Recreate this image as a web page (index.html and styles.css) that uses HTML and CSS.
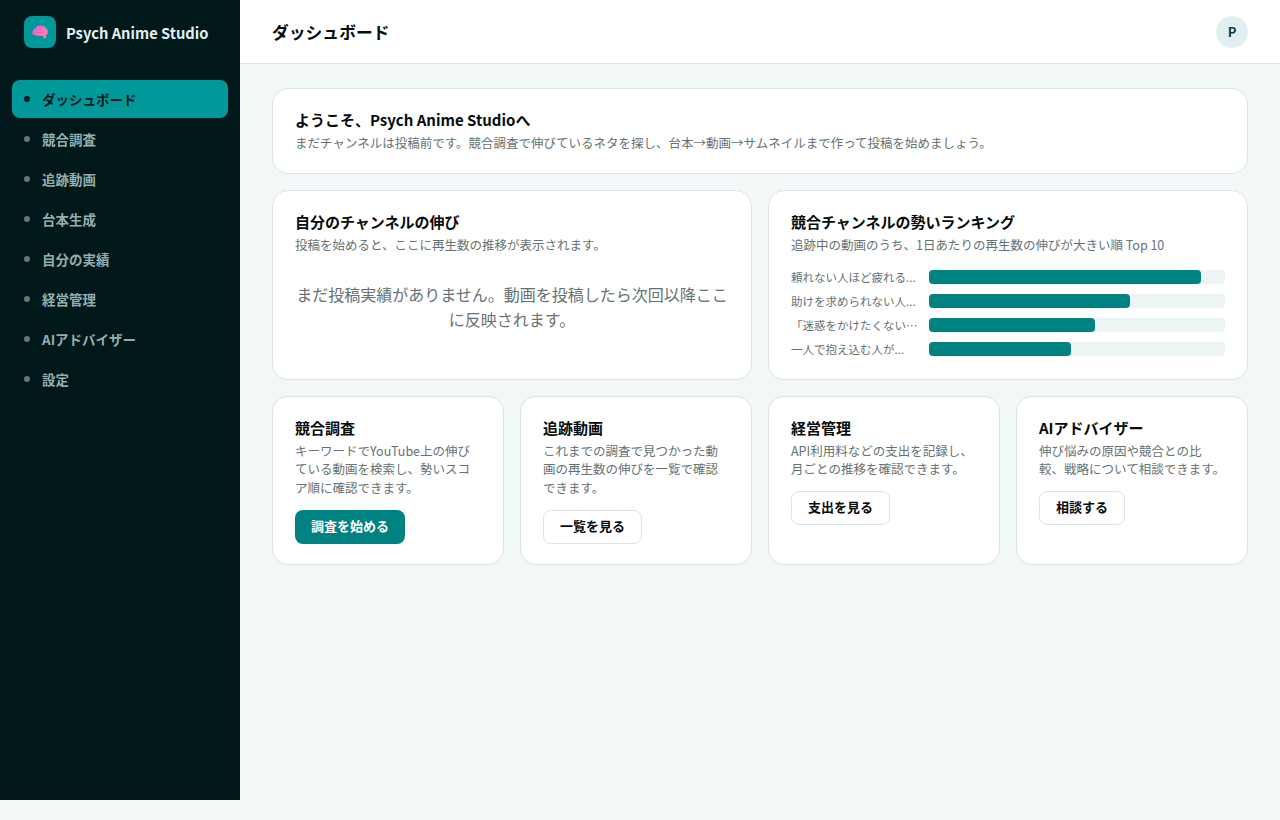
FILE: index.html
```html
<!DOCTYPE html>
<html lang="ja">
<head>
    <meta charset="UTF-8">
    <meta name="viewport" content="width=device-width, initial-scale=1.0">
    <title>Psych Anime Studio</title>
    <link rel="stylesheet" href="styles.css">
</head>
<body>
    <div class="app">
        <aside class="sidebar">
            <div class="brand">
                <span class="brand-logo">
                    <svg class="brain" width="16" height="14" viewBox="0 0 16 14">
                        <defs>
                            <linearGradient id="brainFill" x1="0" y1="0" x2="1" y2="0.6">
                                <stop offset="0" stop-color="#f25ad2"/>
                                <stop offset="1" stop-color="#ff82ae"/>
                            </linearGradient>
                        </defs>
                        <path fill="url(#brainFill)" d="M1.2 9.8C.2 8.8.1 7.2 1 6.2 1 4.6 2 3.4 3.4 3.2 4.1 1.6 5.8.6 7.6.8c1-.6 2.6-.5 3.6.3 1.4.2 2.6 1.1 3.1 2.4 1 .8 1.6 2 1.5 3.4 0 1.6-.9 2.9-2.3 3.5l.7 2.2c.1.4-.1.6-.5.6h-1.3c-.3 0-.5-.1-.6-.4l-.9-1.9c-1.1.2-2 0-2.7-.5-.9.5-2 .5-2.9 0-1 .3-2.2.1-3.1-1z"/>
                        <path fill="none" stroke="#d946b8" stroke-width=".6" opacity=".55" d="M3.4 3.2c.8.2 1.4.8 1.6 1.6M7.6.8c.4 1 .2 2-.5 2.8M11.2 1.1c-.2 1-.8 1.7-1.7 2M14.3 3.5c-.6.8-1.3 1.2-2.2 1.2M6 8c1.200-.8 2.600-.7 3.600.2M3 7c.6.600 1.400.8 2.200.5"/>
                    </svg>
                </span>
                <span class="brand-name">Psych Anime Studio</span>
            </div>
            <nav class="nav">
                <a class="nav-item active"><span class="nav-dot"></span>ダッシュボード</a>
                <a class="nav-item"><span class="nav-dot"></span>競合調査</a>
                <a class="nav-item"><span class="nav-dot"></span>追跡動画</a>
                <a class="nav-item"><span class="nav-dot"></span>台本生成</a>
                <a class="nav-item"><span class="nav-dot"></span>自分の実績</a>
                <a class="nav-item"><span class="nav-dot"></span>経営管理</a>
                <a class="nav-item"><span class="nav-dot"></span>AIアドバイザー</a>
                <a class="nav-item"><span class="nav-dot"></span>設定</a>
            </nav>
        </aside>

        <div class="main">
            <header class="topbar">
                <h1>ダッシュボード</h1>
                <div class="avatar">P</div>
            </header>

            <div class="content">
                <section class="card">
                    <h2>ようこそ、Psych Anime Studioへ</h2>
                    <p class="sub">まだチャンネルは投稿前です。競合調査で伸びているネタを探し、台本→動画→サムネイルまで作って投稿を始めましょう。</p>
                </section>

                <div class="grid-two">
                    <section class="card">
                        <h2>自分のチャンネルの伸び</h2>
                        <p class="sub">投稿を始めると、ここに再生数の推移が表示されます。</p>
                        <p class="empty">まだ投稿実績がありません。動画を投稿したら次回以降ここに反映されます。</p>
                    </section>
                    <section class="card">
                        <h2>競合チャンネルの勢いランキング</h2>
                        <p class="sub">追跡中の動画のうち、1日あたりの再生数の伸びが大きい順 Top 10</p>
                        <div class="ranking">
                            <div class="rank-row">
                                <span class="rank-label">頼れない人ほど疲れる...</span>
                                <div class="rank-track"><div class="rank-fill" style="width: 92%"></div></div>
                            </div>
                            <div class="rank-row">
                                <span class="rank-label">助けを求められない人...</span>
                                <div class="rank-track"><div class="rank-fill" style="width: 68%"></div></div>
                            </div>
                            <div class="rank-row">
                                <span class="rank-label">「迷惑をかけたくない…</span>
                                <div class="rank-track"><div class="rank-fill" style="width: 56%"></div></div>
                            </div>
                            <div class="rank-row">
                                <span class="rank-label">一人で抱え込む人が...</span>
                                <div class="rank-track"><div class="rank-fill" style="width: 48%"></div></div>
                            </div>
                        </div>
                    </section>
                </div>

                <div class="grid-four">
                    <section class="card">
                        <h2>競合調査</h2>
                        <p class="sub">キーワードでYouTube上の伸びている動画を検索し、勢いスコア順に確認できます。</p>
                        <button class="btn primary">調査を始める</button>
                    </section>
                    <section class="card">
                        <h2>追跡動画</h2>
                        <p class="sub">これまでの調査で見つかった動画の再生数の伸びを一覧で確認できます。</p>
                        <button class="btn">一覧を見る</button>
                    </section>
                    <section class="card">
                        <h2>経営管理</h2>
                        <p class="sub">API利用料などの支出を記録し、月ごとの推移を確認できます。</p>
                        <button class="btn">支出を見る</button>
                    </section>
                    <section class="card">
                        <h2>AIアドバイザー</h2>
                        <p class="sub">伸び悩みの原因や競合との比較、戦略について相談できます。</p>
                        <button class="btn">相談する</button>
                    </section>
                </div>
            </div>
        </div>
    </div>
</body>
</html>
```

FILE: styles.css
```css
* {
    box-sizing: border-box;
}
body {
    margin: 0;
    font-family: "Noto Sans CJK JP", "Noto Sans", sans-serif;
    background-color: #f2f7f7;
    color: #060b0c;
}
.app {
    display: flex;
    height: 800px;
}
.sidebar {
    width: 240px;
    flex-shrink: 0;
    background-color: #00181a;
}
.brand {
    display: flex;
    align-items: center;
    gap: 10px;
    height: 64px;
    padding: 0 24px;
}
.brand-logo {
    width: 32px;
    height: 32px;
    display: flex;
    align-items: center;
    justify-content: center;
    border-radius: 8px;
    background-color: #009999;
}
.brand-name {
    font-size: 14.7px;
    font-weight: 700;
    color: #e0f0f0;
}
.nav {
    display: flex;
    flex-direction: column;
    gap: 2px;
    padding: 16px 12px;
}
.nav-item {
    display: flex;
    align-items: center;
    gap: 12px;
    height: 38px;
    padding: 0 12px;
    border-radius: 8px;
    font-size: 13.5px;
    font-weight: 700;
    color: #93aeae;
}
.nav-dot {
    width: 6px;
    height: 6px;
    border-radius: 50%;
    background-color: #5c7a7a;
}
.nav-item.active {
    background-color: #009999;
    color: #00181a;
}
.nav-item.active .nav-dot {
    background-color: #00181a;
}
.main {
    flex: 1;
    min-width: 0;
}
.topbar {
    display: flex;
    align-items: center;
    justify-content: space-between;
    height: 64px;
    padding: 0 32px;
    background-color: #fff;
    border-bottom: 1px solid #dbe5e5;
}
.topbar h1 {
    margin: 0;
    font-size: 16.8px;
    font-weight: 700;
}
.avatar {
    width: 32px;
    height: 32px;
    display: flex;
    align-items: center;
    justify-content: center;
    border-radius: 50%;
    background-color: #e0f0f0;
    color: #00404a;
    font-size: 13px;
    font-weight: 700;
}
.content {
    display: flex;
    flex-direction: column;
    gap: 16px;
    padding: 24px 32px;
}
.grid-two {
    display: grid;
    grid-template-columns: repeat(2, 1fr);
    gap: 16px;
}
.grid-four {
    display: grid;
    grid-template-columns: repeat(4, 1fr);
    gap: 16px;
}
.card {
    background-color: #fff;
    border: 1px solid #dbe5e5;
    border-radius: 16px;
    padding: 20px 22px;
}
.card h2 {
    margin: 0 0 3px;
    font-size: 15px;
    font-weight: 700;
    line-height: 22px;
}
.sub {
    margin: 0;
    font-size: 12.5px;
    line-height: 18.75px;
    color: #667272;
}
.empty {
    margin: 27px 0 0;
    padding-bottom: 27px;
    font-size: 16px;
    line-height: 25px;
    text-align: center;
    color: #667272;
}
.ranking {
    display: flex;
    flex-direction: column;
    gap: 10px;
    margin-top: 15px;
}
.rank-row {
    display: flex;
    align-items: center;
    gap: 12px;
}
.rank-label {
    width: 126px;
    flex-shrink: 0;
    font-size: 11.5px;
    line-height: 14px;
    color: #667272;
    white-space: nowrap;
}
.rank-track {
    flex: 1;
    height: 14px;
    border-radius: 4px;
    background-color: #edf4f4;
}
.rank-fill {
    height: 100%;
    border-radius: 4px;
    background-color: #008282;
}
.btn {
    display: block;
    height: 34px;
    margin-top: 11.75px;
    padding: 0 16px 2px;
    border: 1px solid #dbe5e5;
    border-radius: 8px;
    background-color: #fff;
    color: #060b0c;
    font-family: inherit;
    font-size: 13px;
    font-weight: 700;
}
.btn.primary {
    background-color: #008282;
    border: none;
    color: #fff;
}
```
